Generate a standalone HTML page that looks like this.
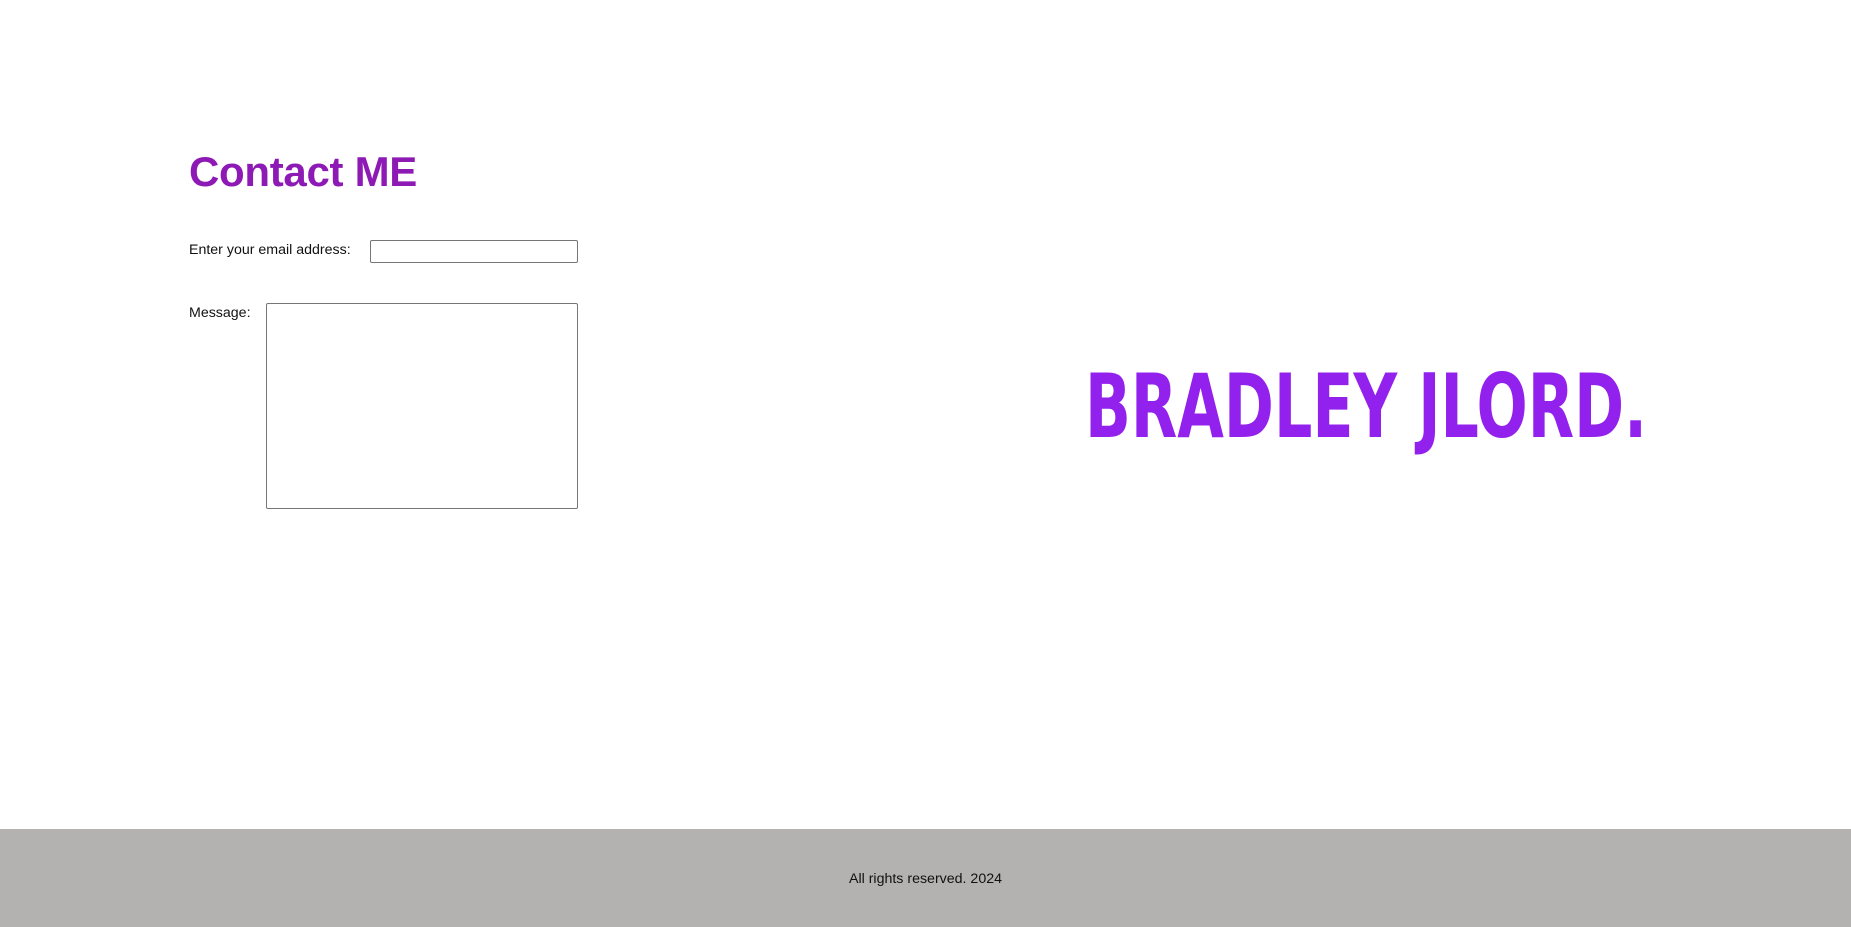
<!DOCTYPE html>
<html><head><meta charset="utf-8"><style>
html,body{margin:0;padding:0;background:#fff;width:1851px;height:927px;overflow:hidden;position:relative;font-family:"Liberation Sans",sans-serif}
.a{position:absolute;white-space:nowrap}
h1{position:absolute;margin:0;left:189px;top:148px;font-size:42px;line-height:48px;font-weight:bold;color:#8e1ab5;letter-spacing:-0.3px}
.lbl{font-size:14.2px;color:#111;line-height:16px}
.box{position:absolute;border:1px solid #767676;border-radius:2px;box-sizing:border-box;background:#fff}
footer{position:absolute;left:0;top:829px;width:1851px;height:98px;background:#b3b2b1}
</style></head><body>
<h1>Contact ME</h1>
<div class="a lbl" style="left:189px;top:242px">Enter your email address:</div>
<div class="a lbl" style="left:189px;top:305px">Message:</div>
<div class="box" style="left:370px;top:240px;width:208px;height:23px"></div>
<div class="box" style="left:266px;top:303px;width:312px;height:206px"></div>
<svg class="a" style="left:0;top:0" width="1851" height="927">
<text x="1085" y="437" font-family="DejaVu Sans Condensed, DejaVu Sans, sans-serif" font-weight="bold" font-size="88" fill="#9321ee" textLength="562" lengthAdjust="spacingAndGlyphs">BRADLEY JLORD.</text>
</svg>
<footer><div class="a" style="left:0;width:1851px;text-align:center;top:42px;font-size:14.2px;color:#111">All rights reserved. 2024</div></footer>
</body></html>
